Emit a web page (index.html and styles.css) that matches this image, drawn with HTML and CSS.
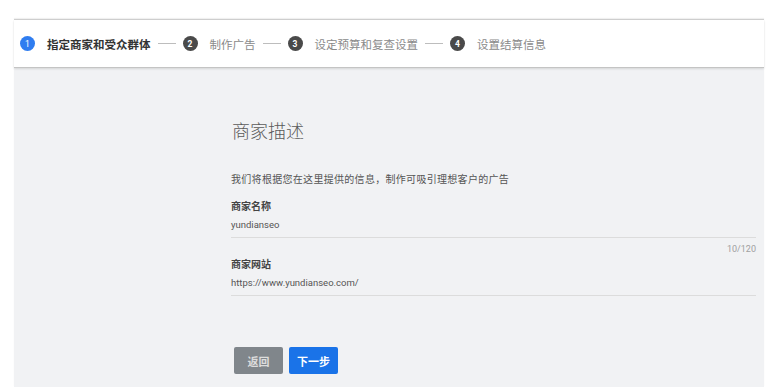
FILE: index.html
```html
<!DOCTYPE html>
<html lang="zh">
<head>
<meta charset="utf-8">
<link rel="stylesheet" href="styles.css">
</head>
<body>
<div class="frame">
  <header class="stepper">
    <div class="step active"><span class="num">1</span><span class="label">指定商家和受众群体</span></div>
    <span class="dash"></span>
    <div class="step"><span class="num">2</span><span class="label">制作广告</span></div>
    <span class="dash"></span>
    <div class="step"><span class="num">3</span><span class="label">设定预算和复查设置</span></div>
    <span class="dash"></span>
    <div class="step"><span class="num">4</span><span class="label">设置结算信息</span></div>
  </header>
  <main class="content">
    <h1 class="title">商家描述</h1>
    <p class="desc">我们将根据您在这里提供的信息，制作可吸引理想客户的广告</p>
    <div class="field">
      <div class="field-label">商家名称</div>
      <div class="field-value">yundianseo</div>
      <div class="counter">10/120</div>
    </div>
    <div class="field">
      <div class="field-label">商家网站</div>
      <div class="field-value">https://www.yundianseo.com/</div>
    </div>
    <div class="actions">
      <button class="btn btn-back">返回</button>
      <button class="btn btn-next">下一步</button>
    </div>
  </main>
</div>
</body>
</html>
```
FILE: styles.css
```css
html, body {
  margin: 0;
  padding: 0;
  background: #ffffff;
  font-family: Roboto, "Noto Sans CJK SC", "Noto Sans", sans-serif;
}
.frame {
  margin: 19px 0 0 14px;
  width: 750px;
  height: 367px;
  background: #f1f2f4;
  border-top: 1px solid #d0d0d0;
  box-shadow: 0 -1px 1px rgba(0,0,0,0.06);
  display: flex;
  flex-direction: column;
}
.stepper {
  height: 47px;
  background: #ffffff;
  border-bottom: 1px solid #c4c4c4;
  box-shadow: 0 1px 2px rgba(0,0,0,0.12);
  display: flex;
  align-items: center;
  padding-left: 6px;
  flex-shrink: 0;
}
.step {
  display: flex;
  align-items: center;
}
.num {
  width: 15px;
  height: 15px;
  border-radius: 50%;
  background: #4a4a4a;
  color: #ffffff;
  font-size: 8.5px;
  font-weight: 700;
  display: flex;
  align-items: center;
  justify-content: center;
  font-family: Roboto, sans-serif;
}
.step.active .num {
  background: #2f7df0;
  font-weight: 400;
}
.label {
  margin-left: 12px;
  font-size: 11.5px;
  color: #8a8a8a;
}
.step.active .label {
  color: #333333;
  font-weight: 700;
}
.dash {
  width: 18px;
  height: 1px;
  background: #bdbdbd;
  margin: 0 7px;
}
.content {
  padding: 0 8px 0 217px;
  display: flex;
  flex-direction: column;
}
.title {
  margin: 52px 0 0 1px;
  font-size: 18px;
  font-weight: 300;
  color: #5a5a5a;
  line-height: 24px;
}
.desc {
  margin: 29px 0 0 0;
  font-size: 10px;
  letter-spacing: 0.3px;
  color: #555555;
  line-height: 14px;
}
.field {
  display: flex;
  flex-direction: column;
}
.field-label {
  margin-top: 13px;
  font-size: 10px;
  font-weight: 700;
  color: #444444;
  line-height: 14px;
}
.field-value {
  margin-top: 4px;
  font-size: 9.5px;
  color: #555555;
  line-height: 14px;
  padding-bottom: 5px;
  border-bottom: 1px solid #dcdcdc;
}
.counter {
  align-self: flex-end;
  margin-top: 5px;
  font-size: 9px;
  color: #a0a0a0;
  line-height: 12px;
  margin-bottom: -10px;
}
.actions {
  display: flex;
  gap: 6px;
  margin-top: 51px;
  margin-left: 3px;
}
.btn {
  width: 49px;
  height: 27px;
  border: none;
  border-radius: 2px;
  font-family: "Noto Sans CJK SC", sans-serif;
  font-size: 11px;
  font-weight: 700;
  padding: 0;
}
.btn-back {
  background: #80868b;
  color: #dcdcdc;
}
.btn-next {
  background: #1a73e8;
  color: #ffffff;
}
```
